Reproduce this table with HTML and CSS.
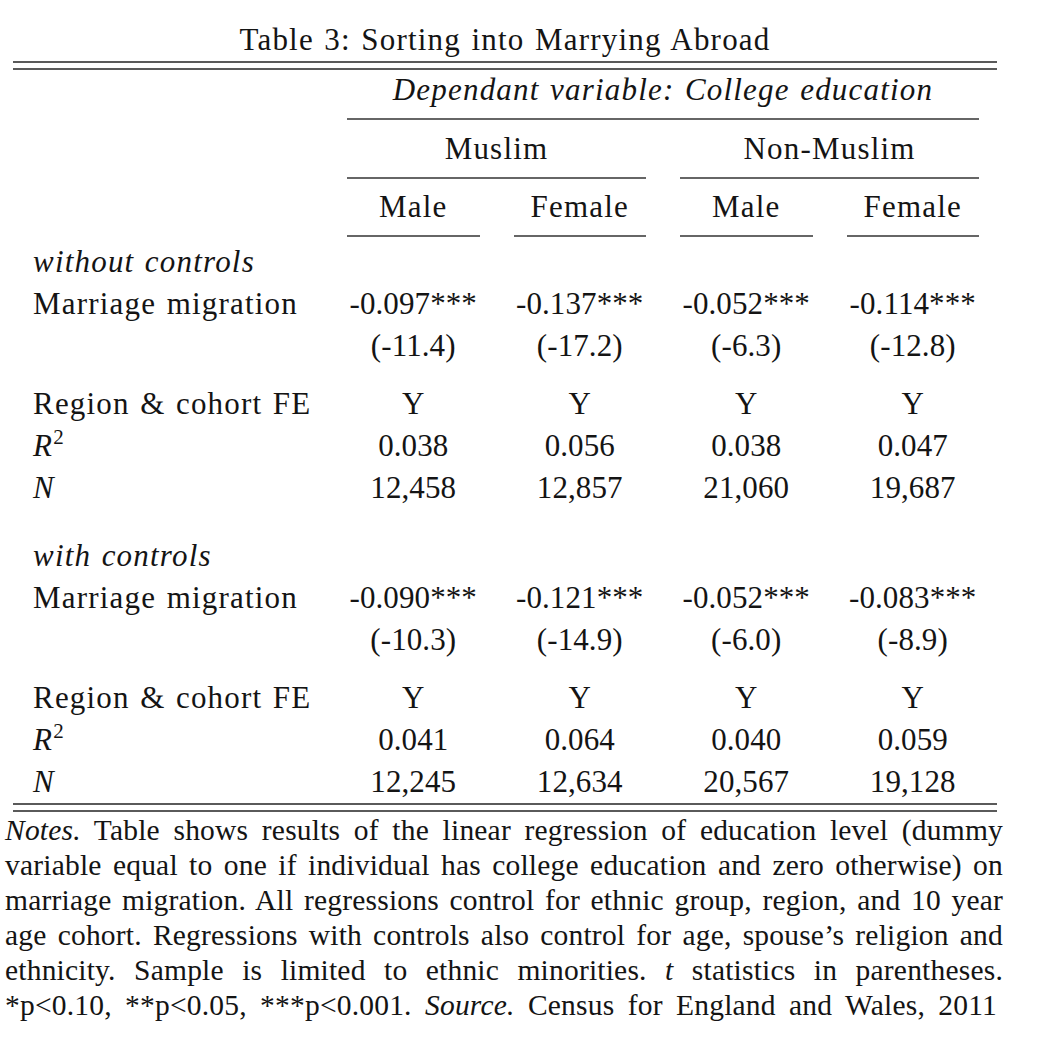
FILE: index.html
```html
<!DOCTYPE html>
<html lang="en">
<head>
<meta charset="utf-8">
<title>Table 3: Sorting into Marrying Abroad</title>
<link rel="stylesheet" href="styles.css">
</head>
<body>
<div class="page">
  <div class="caption">Table 3: Sorting into Marrying Abroad</div>
  <div class="tbl">
    <div class="double"></div>

    <div class="row head-a">
      <div class="label"></div>
      <div class="span4 it">Dependant variable: College education</div>
    </div>
    <div class="row head-b">
      <div class="label"></div>
      <div class="span2">Muslim</div>
      <div class="span2">Non-Muslim</div>
    </div>
    <div class="row head-c">
      <div class="label"></div>
      <div class="hc">Male</div>
      <div class="hc">Female</div>
      <div class="hc">Male</div>
      <div class="hc">Female</div>
    </div>

    <div class="row first">
      <div class="label it">without controls</div>
    </div>
    <div class="row">
      <div class="label">Marriage migration</div>
      <div class="num">-0.097***</div>
      <div class="num">-0.137***</div>
      <div class="num">-0.052***</div>
      <div class="num">-0.114***</div>
    </div>
    <div class="row">
      <div class="label"></div>
      <div class="num">(-11.4)</div>
      <div class="num">(-17.2)</div>
      <div class="num">(-6.3)</div>
      <div class="num">(-12.8)</div>
    </div>
    <div class="row gap-s">
      <div class="label">Region &amp; cohort FE</div>
      <div class="num">Y</div>
      <div class="num">Y</div>
      <div class="num">Y</div>
      <div class="num">Y</div>
    </div>
    <div class="row">
      <div class="label"><i>R</i><sup class="sup">2</sup></div>
      <div class="num">0.038</div>
      <div class="num">0.056</div>
      <div class="num">0.038</div>
      <div class="num">0.047</div>
    </div>
    <div class="row">
      <div class="label it">N</div>
      <div class="num">12,458</div>
      <div class="num">12,857</div>
      <div class="num">21,060</div>
      <div class="num">19,687</div>
    </div>

    <div class="row gap-l">
      <div class="label it">with controls</div>
    </div>
    <div class="row">
      <div class="label">Marriage migration</div>
      <div class="num">-0.090***</div>
      <div class="num">-0.121***</div>
      <div class="num">-0.052***</div>
      <div class="num">-0.083***</div>
    </div>
    <div class="row">
      <div class="label"></div>
      <div class="num">(-10.3)</div>
      <div class="num">(-14.9)</div>
      <div class="num">(-6.0)</div>
      <div class="num">(-8.9)</div>
    </div>
    <div class="row gap-s">
      <div class="label">Region &amp; cohort FE</div>
      <div class="num">Y</div>
      <div class="num">Y</div>
      <div class="num">Y</div>
      <div class="num">Y</div>
    </div>
    <div class="row">
      <div class="label"><i>R</i><sup class="sup">2</sup></div>
      <div class="num">0.041</div>
      <div class="num">0.064</div>
      <div class="num">0.040</div>
      <div class="num">0.059</div>
    </div>
    <div class="row">
      <div class="label it">N</div>
      <div class="num">12,245</div>
      <div class="num">12,634</div>
      <div class="num">20,567</div>
      <div class="num">19,128</div>
    </div>

    <div class="double"></div>
  </div>

  <div class="notes">
    <div class="line"><i>Notes.</i> Table shows results of the linear regression of education level (dummy</div>
    <div class="line">variable equal to one if individual has college education and zero otherwise) on</div>
    <div class="line">marriage migration. All regressions control for ethnic group, region, and 10 year</div>
    <div class="line">age cohort. Regressions with controls also control for age, spouse’s religion and</div>
    <div class="line">ethnicity. Sample is limited to ethnic minorities. <i>t</i> statistics in parentheses.</div>
    <div class="line last">*p&lt;0.10, **p&lt;0.05, ***p&lt;0.001. <i>Source.</i> Census for England and Wales, 2011</div>
  </div>
</div>
</body>
</html>
```

FILE: styles.css
```css
html, body {
  margin: 0;
  padding: 0;
  background: #ffffff;
}

body {
  color: #141414;
  font-family: "Liberation Serif", "Times New Roman", serif;
}

.page {
  width: 998px;
  padding: 20px 0 0 5px;
}

.caption {
  margin: 0 6px 0 8px;
  height: 41px;
  font-size: 31px;
  line-height: 40px;
  letter-spacing: 1.2px;
  word-spacing: 1.5px;
  text-align: center;
}

.tbl {
  margin: 0 6px 0 8px;
}

.double {
  height: 5px;
  border-top: 2px solid #5a5a5a;
  border-bottom: 2px solid #5a5a5a;
}

.row {
  display: grid;
  grid-template-columns: 280px repeat(4, 132.5px);
  column-gap: 34px;
  padding-left: 20px;
  font-size: 31px;
  line-height: 42px;
  letter-spacing: 1.2px;
  word-spacing: 1.5px;
  white-space: nowrap;
}

.it {
  font-style: italic;
}

.label {
  text-align: left;
}

.num {
  text-align: center;
  letter-spacing: 0.1px;
}

.sup {
  font-size: 21px;
  line-height: 0;
  vertical-align: 12px;
  letter-spacing: 0;
}

.head-a .span4 {
  grid-column: 2 / 6;
  line-height: 40px;
  padding-bottom: 8px;
  border-bottom: 2px solid #666666;
  text-align: center;
}

.head-b {
  line-height: 57px;
}

.head-b .span2 {
  grid-column: span 2;
  text-align: center;
  border-bottom: 2px solid #666666;
}

.head-c {
  line-height: 56px;
}

.head-c .hc {
  text-align: center;
  border-bottom: 2px solid #666666;
}

.first {
  margin-top: 4px;
}

.gap-s {
  margin-top: 16px;
}

.gap-l {
  margin-top: 26px;
}

.notes {
  margin-top: 1px;
  font-size: 29.5px;
  line-height: 35px;
  letter-spacing: 0.2px;
}

.line {
  text-align: justify;
  text-align-last: justify;
}

.line.last {
  margin-right: 6px;
}
```
